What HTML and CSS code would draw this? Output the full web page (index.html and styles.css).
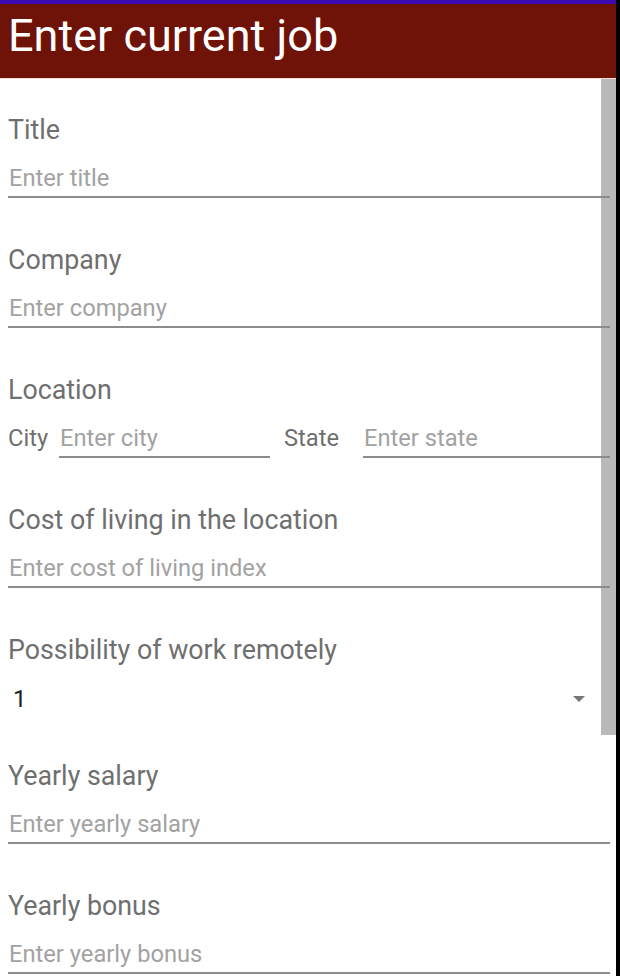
FILE: index.html
```
<!DOCTYPE html>
<html>
<head>
<meta charset="utf-8">
<link rel="stylesheet" href="styles.css">
</head>
<body>
<div class="screen">
  <header class="appbar">
    <h1 class="appbar-title">Enter current job</h1>
  </header>
  <main class="form">
    <div class="scrollbar"></div>
    <section class="field">
      <div class="label">Title</div>
      <div class="input placeholder">Enter title</div>
    </section>
    <section class="field">
      <div class="label">Company</div>
      <div class="input placeholder">Enter company</div>
    </section>
    <section class="field">
      <div class="label">Location</div>
      <div class="loc-row">
        <span class="sub-label city-label">City</span>
        <div class="input placeholder city-input">Enter city</div>
        <span class="sub-label state-label">State</span>
        <div class="input placeholder state-input">Enter state</div>
      </div>
    </section>
    <section class="field">
      <div class="label">Cost of living in the location</div>
      <div class="input placeholder">Enter cost of living index</div>
    </section>
    <section class="field spinner-field">
      <div class="label">Possibility of work remotely</div>
      <div class="spinner">
        <span class="spinner-value">1</span>
        <span class="spinner-arrow"></span>
      </div>
    </section>
    <section class="field">
      <div class="label">Yearly salary</div>
      <div class="input placeholder">Enter yearly salary</div>
    </section>
    <section class="field">
      <div class="label">Yearly bonus</div>
      <div class="input placeholder">Enter yearly bonus</div>
    </section>
  </main>
</div>
</body>
</html>
```
FILE: styles.css
```
html, body {
  margin: 0;
  padding: 0;
  background: #000;
  height: 976px;
  overflow: hidden;
}
.screen {
  width: 616px;
  height: 976px;
  background: #fff;
  font-family: Roboto, "Noto Sans", sans-serif;
  overflow: hidden;
}
.appbar {
  border-top: 4px solid #3a0bb3;
  background: #6f1208;
  height: 74px;
  box-sizing: content-box;
  border-bottom: 1px solid #f3dcd8;
}
.appbar-title {
  margin: 0;
  padding: 10px 0 0 8px;
  font-weight: 400;
  font-size: 45px;
  line-height: 44px;
  color: #fff;
}
.form {
  position: relative;
  display: flex;
  flex-direction: column;
  gap: 47px;
  padding: 36px 6px 0 8px;
}
.scrollbar {
  position: absolute;
  right: 0;
  top: 0;
  width: 15px;
  height: 656px;
  background: #b9b9b9;
}
.field {
  position: relative;
  display: flex;
  flex-direction: column;
}
.label {
  height: 30px;
  line-height: 30px;
  font-size: 26.8px;
  color: #6f6f6f;
}
.input {
  margin-top: 18px;
  height: 30px;
  line-height: 30px;
  font-size: 23.7px;
  padding-bottom: 3px;
  border-bottom: 2px solid #8c8c8c;
  padding-left: 1px;
}
.placeholder {
  color: #a2a2a2;
}
.loc-row {
  display: flex;
  align-items: flex-end;
}
.sub-label {
  font-size: 23.7px;
  line-height: 30px;
  height: 30px;
  padding-bottom: 5px;
  color: #6f6f6f;
}
.city-label {
  width: 51px;
}
.city-input {
  width: 210px;
}
.state-label {
  margin-left: 14px;
  width: 79px;
}
.state-input {
  flex: 1;
}
.spinner-field {
  margin-bottom: 0;
}
.spinner {
  margin-top: 19px;
  height: 30px;
  display: flex;
  align-items: center;
  justify-content: space-between;
  padding: 0 25px 0 5px;
}
.spinner-value {
  font-size: 24px;
  line-height: 30px;
  color: #222;
}
.spinner-arrow {
  width: 0;
  height: 0;
  border-left: 6px solid transparent;
  border-right: 6px solid transparent;
  border-top: 6px solid #757575;
}
```
